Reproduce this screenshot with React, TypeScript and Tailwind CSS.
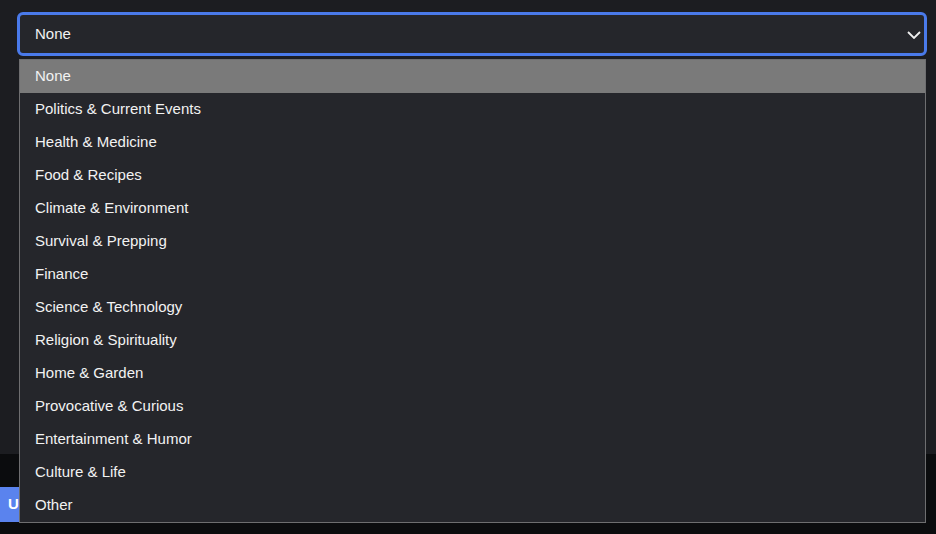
const categories = [
    "None",
    "Politics & Current Events",
    "Health & Medicine",
    "Food & Recipes",
    "Climate & Environment",
    "Survival & Prepping",
    "Finance",
    "Science & Technology",
    "Religion & Spirituality",
    "Home & Garden",
    "Provocative & Curious",
    "Entertainment & Humor",
    "Culture & Life",
    "Other",
];

function CategoryMenu({ selected }: { selected: string }) {
    return (
        <ul className="absolute left-[19px] top-[59px] w-[907px] bg-[#25262b] border border-[#6e6e70]">
            {categories.map((item) =>
                <li
                    key={item}
                    className={`h-[33px] flex items-center px-[15px] text-[15px] text-[#f2f2f2] ${item === selected ? 'bg-[#7a7a7a]' : ''}`}
                >
                    {item}
                </li>
            )}
        </ul>
    );
}

export default function App() {
    const selected = "None";

    return (
        <div className="relative w-[936px] h-[534px] overflow-hidden font-['Liberation_Sans',Arial,sans-serif] bg-[#0b0c0e]">
            <div className="h-[454px] bg-[#1c1d21] pt-[12px] pl-[17px]">
                <div className="w-[910px] h-[44px] flex items-center justify-between pl-[15px] pr-[3px] bg-[#25262b] border-[3px] border-[#4a7aea] rounded-[6px]">
                    <span className="text-[15px] text-[#f2f2f2]">{selected}</span>
                    <svg width="14" height="8" viewBox="0 0 14 8" className="mt-[1px]">
                        <polyline points="1,1 7,7 13,1" fill="none" stroke="#eeeeee" strokeWidth="1.8" />
                    </svg>
                </div>
            </div>

            <div className="pt-[33px]">
                <button className="h-[35px] w-[78px] px-[8px] text-left bg-[#5a83ee] text-white font-bold text-[15px]">
                    U
                </button>
            </div>

            <CategoryMenu selected={selected} />
        </div>
    );
}
